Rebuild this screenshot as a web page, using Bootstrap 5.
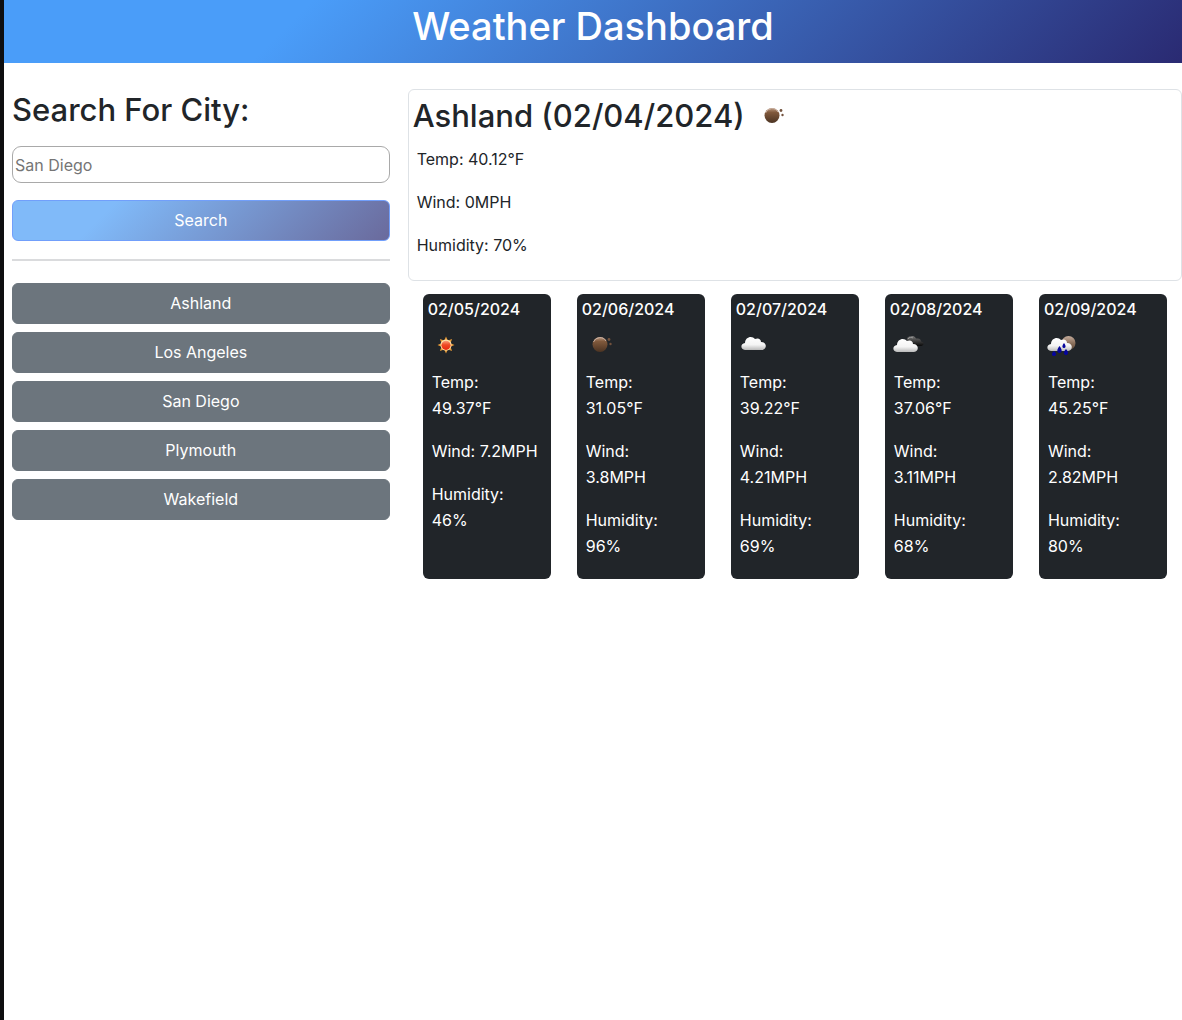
<!DOCTYPE html>
<html lang="en">
<head>
<meta charset="utf-8">
<meta name="viewport" content="width=device-width, initial-scale=1">
<title>Weather Dashboard</title>
<link href="https://cdn.jsdelivr.net/npm/bootstrap@5.3.0/dist/css/bootstrap.min.css" rel="stylesheet">
<style>
body { font-family: Inter, "Liberation Sans", sans-serif; font-size: 16px; line-height: 26px; border-left: 4px solid #0e0e10; }
.page-head { background: linear-gradient(135deg, #4a9df9 25%, #2a2a72); padding-bottom: 11px; }
.page-head h1 { font-size: 38px; line-height: 52px; }
.search-side { padding: 26px 7px 0 8px; }
.result-side { padding: 26px 0 0 11px; }
.side-title, .city-title { font-size: 31px; line-height: 42px; }
.side-title { margin-bottom: 15px; }
.city-input { height: 37px; padding: 0 2px; border: 1px solid #a9a9a9; border-radius: 9px; margin-bottom: 17px; }
.city-input::placeholder { color: #757575; }
.btn { font-size: 16px; line-height: 27px; padding: 6px 12px; border-radius: 6px; }
.btn-search, .btn-search:hover { color: #fff; border-color: #719ffb; background: linear-gradient(135deg, #80baf9 25%, #6a6a9c); }
.side-rule { border-top: 2px solid #b5b8bb; opacity: .5; margin: 18px 0 22px; }
.current { border: 1px solid #dee2e6; border-radius: 6px; padding: 5px 4px; margin-bottom: 13px; }
.city-line { gap: 9px; margin-bottom: 9px; }
.reading { margin: 0 4px 17px; }
.wx { width: 36px; height: 36px; display: block; }
.forecast { gap: 26px; padding: 0 15px; }
.day { flex: 1 1 0; min-width: 0; background: #212529; color: #fff; border-radius: 6px; padding: 4px 5px 3px; }
.day h2 { font-size: 16px; line-height: 22px; margin-bottom: 7px; }
.day .wx { margin-bottom: 6px; }
.day .reading { margin-right: 7px; }
</style>
<script src="https://cdn.jsdelivr.net/npm/bootstrap@5.3.0/dist/js/bootstrap.bundle.min.js" defer></script>
</head>
<body class="min-vh-100">
<svg width="0" height="0" class="position-absolute" aria-hidden="true">
  <defs>
    <linearGradient id="brown" x1="0" y1="0" x2="0" y2="1"><stop offset="0" stop-color="#b9987f"/><stop offset=".3" stop-color="#80593c"/><stop offset="1" stop-color="#4b3322"/></linearGradient>
    <linearGradient id="brownpale" x1="0" y1="0" x2="0" y2="1"><stop offset="0" stop-color="#c4ab9b"/><stop offset=".5" stop-color="#8d725e"/><stop offset="1" stop-color="#5b4636"/></linearGradient>
    <linearGradient id="white" x1="0" y1="0" x2="0" y2="1"><stop offset="0" stop-color="#fff"/><stop offset=".6" stop-color="#f4f4f4"/><stop offset="1" stop-color="#b9b9b9"/></linearGradient>
    <linearGradient id="dark" x1="0" y1="0" x2="0" y2="1"><stop offset="0" stop-color="#777"/><stop offset=".5" stop-color="#3e3e3e"/><stop offset="1" stop-color="#080808"/></linearGradient>
    <linearGradient id="red" x1="0" y1="0" x2="0" y2="1"><stop offset="0" stop-color="#f9a27b"/><stop offset=".45" stop-color="#ef4a25"/><stop offset="1" stop-color="#e8290f"/></linearGradient>
    <path id="puff" d="M4 17C-.8 16.500-.8 10.500 4 10 4 4 11 2 14 6c3-1.500 6-.2 6 3 6-.2 6.500 7.500 1 8Z"/>
    <symbol id="night" viewBox="0 0 36 36"><circle cx="18" cy="17.500" r="7.500" fill="url(#brown)"/><path d="M11.500 15a7 7 0 0 1 12.500-1" fill="none" stroke="#c9afa0" stroke-width="1"/><circle cx="27" cy="12.500" r="1.400" fill="#72523d"/><circle cx="28.500" cy="17" r="1.200" fill="#72523d"/></symbol>
    <symbol id="sun" viewBox="0 0 36 36"><path d="m18 9.500 1.800 4 4.300-1.600-1.600 4.300 4 1.800-4 1.800 1.600 4.300-4.300-1.600-1.800 4-1.800-4-4.300 1.600 1.600-4.300-4-1.800 4-1.800-1.600-4.300 4.300 1.600Z" fill="#e89b37"/><circle cx="18" cy="18" r="5.500" fill="#ffe6ae"/><circle cx="18" cy="18.300" r="4.600" fill="url(#red)"/></symbol>
    <symbol id="cloud" viewBox="0 0 36 36"><use href="#puff" x="5" y="6" fill="url(#white)"/></symbol>
    <symbol id="clouds" viewBox="0 0 36 36"><path d="M18 15c-3-3 0-6 3-5.500 2-1 4 0 5 2 4-.5 5 1 5 3 4 1 3 4 0 4.500H20Z" fill="url(#dark)"/><path d="M18 12c1-2 4-2 5-1" fill="none" stroke="#999" stroke-width="1"/><use href="#puff" x="3" y="8" fill="url(#white)"/></symbol>
    <symbol id="rain" viewBox="0 0 36 36"><circle cx="24.500" cy="16" r="7" fill="url(#brownpale)"/><use href="#puff" x="3" y="7" fill="url(#white)"/><g fill="#06069e"><path d="M15.500 19c4 5 1.500 7 0 7s-4-2 0-7Zm4.500-3c3 4 1 5 0 5s-3-1 0-5Zm2 6c4 4 1 6 0 6s-4-2 0-6Zm-12 2c4 4 1 5 0 5s-4-1 0-5Z"/></g></symbol>
  </defs>
</svg>
<header class="page-head text-center text-white"><h1 class="mb-0">Weather Dashboard</h1></header>
<main class="row g-0">
  <aside class="col-4 search-side">
    <form>
      <label for="city" class="side-title h2 d-block">Search For City:</label>
      <input id="city" type="text" class="city-input d-block w-100" placeholder="San Diego">
      <button type="button" class="btn btn-search w-100 d-block">Search</button>
    </form>
    <hr class="side-rule">
    <div class="d-grid gap-2">
      <button type="button" class="btn btn-secondary">Ashland</button>
      <button type="button" class="btn btn-secondary">Los Angeles</button>
      <button type="button" class="btn btn-secondary">San Diego</button>
      <button type="button" class="btn btn-secondary">Plymouth</button>
      <button type="button" class="btn btn-secondary">Wakefield</button>
    </div>
  </aside>
  <div class="col-8 result-side">
    <section class="current">
      <div class="city-line d-flex align-items-center">
        <h2 class="city-title mb-0">Ashland (02/04/2024)</h2>
        <svg class="wx" role="img" aria-label="Clear night"><use href="#night"/></svg>
      </div>
      <p class="reading">Temp: 40.12°F</p>
      <p class="reading">Wind: 0MPH</p>
      <p class="reading">Humidity: 70%</p>
    </section>
    <section class="forecast d-flex">
      <article class="day"><h2>02/05/2024</h2><svg class="wx" role="img" aria-label="Sunny"><use href="#sun"/></svg><p class="reading">Temp: 49.37°F</p><p class="reading">Wind: 7.2MPH</p><p class="reading">Humidity: 46%</p></article>
      <article class="day"><h2>02/06/2024</h2><svg class="wx" role="img" aria-label="Clear night"><use href="#night"/></svg><p class="reading">Temp: 31.05°F</p><p class="reading">Wind: 3.8MPH</p><p class="reading">Humidity: 96%</p></article>
      <article class="day"><h2>02/07/2024</h2><svg class="wx" role="img" aria-label="Cloudy"><use href="#cloud"/></svg><p class="reading">Temp: 39.22°F</p><p class="reading">Wind: 4.21MPH</p><p class="reading">Humidity: 69%</p></article>
      <article class="day"><h2>02/08/2024</h2><svg class="wx" role="img" aria-label="Broken clouds"><use href="#clouds"/></svg><p class="reading">Temp: 37.06°F</p><p class="reading">Wind: 3.11MPH</p><p class="reading">Humidity: 68%</p></article>
      <article class="day"><h2>02/09/2024</h2><svg class="wx" role="img" aria-label="Rain"><use href="#rain"/></svg><p class="reading">Temp: 45.25°F</p><p class="reading">Wind: 2.82MPH</p><p class="reading">Humidity: 80%</p></article>
    </section>
  </div>
</main>
</body>
</html>
